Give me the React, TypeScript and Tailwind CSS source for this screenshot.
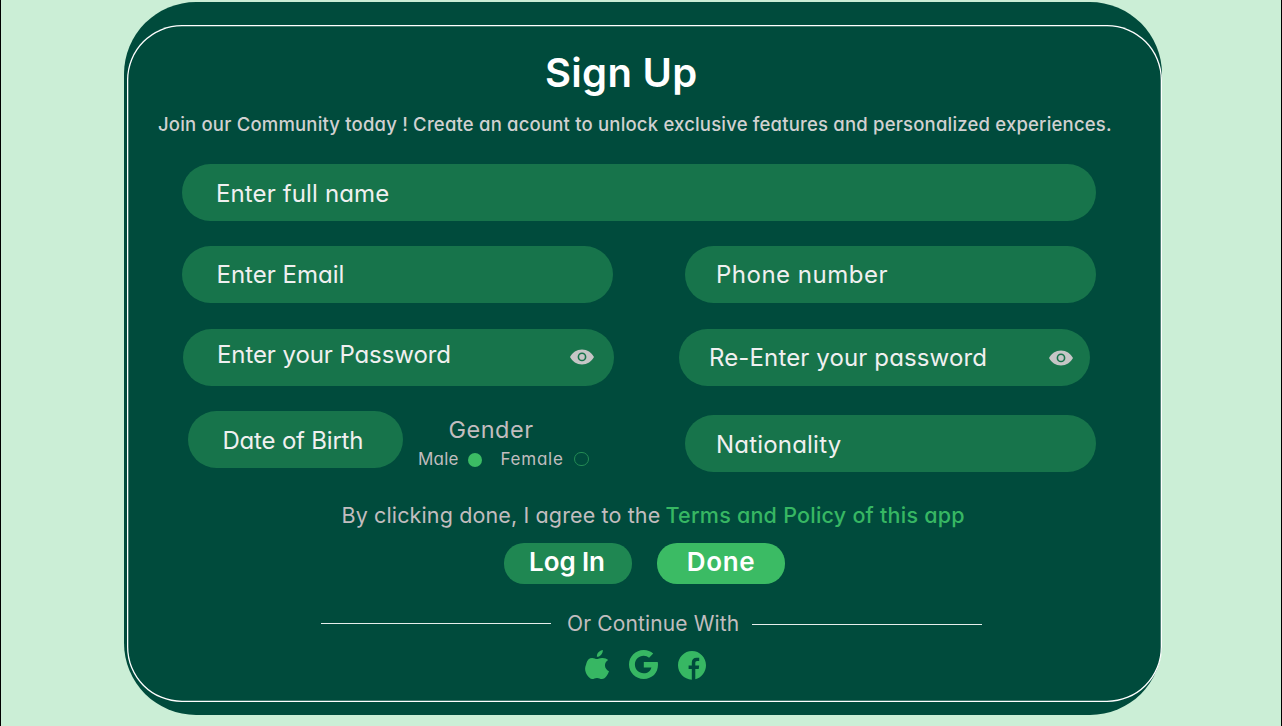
import type { ReactNode } from "react";

function EyeIcon() {
  return (
    <svg viewBox="0 0 24 16" className="h-4 w-6 shrink-0" aria-hidden="true">
      <path
        fill="#c6c6c6"
        fillRule="evenodd"
        d="M12 .4C6.8 .4 2.3 3.4 0 7.9c2.3 4.5 6.8 7.5 12 7.5s9.7-3 12-7.5C21.7 3.4 17.2 .4 12 .4Zm0 3.1a4.4 4.4 0 1 1 0 8.8 4.4 4.4 0 0 1 0-8.8Zm0 1.6a2.8 2.8 0 1 0 0 5.6 2.8 2.8 0 0 0 0-5.6Z"
      />
    </svg>
  );
}

function AppleIcon() {
  return (
    <svg viewBox="3.2 1 17.8 22" preserveAspectRatio="none" className="h-[29px] w-6" aria-hidden="true">
      <path
        fill="#37b763"
        d="M16.4 1c.1 1.3-.4 2.6-1.2 3.6-.8 1-2 1.700-3.200 1.600-.1-1.300.4-2.500 1.200-3.400C14 1.800 15.300 1.100 16.400 1ZM20.400 8.500c-1.500.9-2.400 2.300-2.400 4.100 0 2 1.200 3.800 3 4.500-.4 1.300-1 2.500-1.800 3.600-1 1.400-2 2.300-3.500 2.300-1.300 0-2-.8-3.600-.8s-2.300.8-3.500.8c-1.500 0-2.700-1.300-3.600-2.600-1.600-2.300-2.400-5.200-1-8.400.1-.4.200-.8.300-1.200C4.900 8.500 6.500 7 8.500 7c1.400 0 2.600.9 3.500.9S14.300 6.900 16.100 7c1.700 0 3.300.6 4.300 1.500Z"
      />
    </svg>
  );
}

function GoogleIcon() {
  return (
    <svg viewBox="0 0 29 29" className="h-[29px] w-[29px]" aria-hidden="true">
      <path
        fill="#37b763"
        d="M14.8 11.9h13.9c.2.9.3 1.8.3 2.7C29 23.2 23.2 29 14.7 29 6.6 29 0 22.5 0 14.5S6.6 0 14.7 0c3.7 0 7 1.3 9.5 3.6l-4.1 4.100c-1.500-1.300-3.300-2-5.400-2-4.900 0-8.800 3.900-8.800 8.800s3.900 8.800 8.800 8.800c4 0 6.900-2.200 7.700-5.900h-7.600Z"
      />
    </svg>
  );
}

function FacebookIcon() {
  return (
    <svg viewBox="0 0 28 29" className="h-[29px] w-7" aria-hidden="true">
      <path
        fill="#37b763"
        d="M14 0C6.3 0 0 6.3 0 14.2c0 7.7 6 14 13.8 14.5V18.1h-3.2v-3.500h3.200v-3.200c0-3.100 1.800-4.700 4.700-4.700h2.700v3.200h-2c-1.300 0-1.900.7-1.900 2v2.700h3.900l-.5 3.500h-3.400v10.100C23.300 26.800 28 21 28 14.200 28 6.300 21.700 0 14 0Z"
      />
    </svg>
  );
}

function Field({ className, label, text, children }: { className: string; label: string; text: string; children?: ReactNode }) {
  return (
    <div className={`flex h-[57px] items-center justify-between rounded-full bg-[#17744b] ${className}`}>
      <span className={`whitespace-nowrap text-[24px] leading-8 text-[#f0f0f0] ${text}`}>{label}</span>
      {children}
    </div>
  );
}

export default function App() {
  return (
    <div className="flex h-[726px] w-[1282px] items-start overflow-hidden border-x border-black bg-[#cbeed6] pt-[2px] pl-[123px] font-['Inter','Noto_Sans',sans-serif] [font-feature-settings:'cv11']">
      <main className="relative flex h-[713px] w-[1038px] shrink-0 flex-col rounded-[72px] bg-[#004b3c]">
        <div className="pointer-events-none absolute top-[23px] left-[3px] h-[677px] w-[1035px] rounded-[55px] shadow-[inset_0_0_0_1.3px_#fff]" />

        <h1 className="mt-[47px] ml-[421px] text-[40px] leading-[48px] font-semibold tracking-[0.3px] whitespace-nowrap text-white">
          Sign Up
        </h1>
        <p className="mt-[15px] ml-[34px] text-[18.5px] leading-6 font-medium tracking-[0.19px] whitespace-nowrap text-[#d1d1d1]">
          Join our Community today ! Create an acount to unlock exclusive features and personalized experiences.
        </p>

        <form className="flex flex-col" onSubmit={(e) => e.preventDefault()}>
          <Field className="mt-[28px] ml-[58px] w-[914px] pt-[3px] pl-[34px]" label="Enter full name" text="tracking-[0.13px]" />

          <div className="mt-[25px] ml-[58px] flex gap-[72px]">
            <Field className="w-[431px] pt-px pl-[34.5px]" label="Enter Email" text="tracking-[0px]" />
            <Field className="w-[411px] pl-[31px]" label="Phone number" text="tracking-[0.5px]" />
          </div>

          <div className="mt-[26px] ml-[59px] flex gap-[65px]">
            <Field className="w-[431px] pr-[20px] pb-px pl-[34px]" label="Enter your Password" text="pb-[4px] tracking-[-0.09px]">
              <EyeIcon />
            </Field>
            <Field className="w-[411px] pt-px pr-[17px] pl-[30px]" label="Re-Enter your password" text="tracking-[0.13px]">
              <EyeIcon />
            </Field>
          </div>

          <div className="mt-[25px] ml-[64px] flex h-[61px] items-start">
            <Field className="w-[215px] pt-[2px] pl-[34.5px]" label="Date of Birth" text="tracking-[-0.2px]" />
            <fieldset className="ml-[15px] w-[267px] text-[#c2bdbf]">
              <div className="mt-[5px] ml-[30.5px] text-[23.5px] leading-7 tracking-[0.5px]">Gender</div>
              <div className="mt-[4px] flex h-5 items-center text-[17px] leading-5">
                <span className="w-[50px] pt-px tracking-[0.2px]">Male</span>
                <span className="mt-[3px] h-3.5 w-3.5 rounded-full bg-[#3bbb64]" />
                <span className="ml-[18.5px] w-[73.5px] pt-px tracking-[0.75px]">Female</span>
                <span className="mt-[2px] h-[14.5px] w-[14.5px] rounded-full border border-[#248b54]" />
              </div>
            </fieldset>
            <Field className="mt-1 w-[411px] pt-[3px] pl-[31px]" label="Nationality" text="tracking-[0.2px]" />
          </div>

          <p className="mt-[29px] ml-[217.5px] text-[21.5px] leading-7 whitespace-nowrap text-[#c2bdbf]">
            <span className="inline-block w-[324px] tracking-[0.13px]">By clicking done, I agree to the</span>
            <a className="font-medium tracking-[0.24px] text-[#37b763]">Terms and Policy of this app</a>
          </p>

          <div className="mt-[14px] ml-[380px] flex gap-[25px] text-[26px] leading-9 font-semibold text-white">
            <button className="h-[41px] w-[128px] rounded-[20px] bg-[#1f8752] pr-[2px] pb-[4px] tracking-[-0.1px]">Log In</button>
            <button className="h-[41px] w-[128px] rounded-[20px] bg-[#3bbb64] pb-[4px] tracking-[0.6px]">Done</button>
          </div>
        </form>

        <div className="mt-[26px] ml-[197px] flex h-7 items-start">
          <span className="mt-[13px] h-px w-[230px] bg-[#e6eeec]" />
          <span className="ml-[16px] w-[185px] text-[21px] leading-7 tracking-[0.13px] whitespace-nowrap text-[#c2bdbf]">
            Or Continue With
          </span>
          <span className="mt-[14px] h-px w-[230px] bg-[#e6eeec]" />
        </div>

        <div className="mt-[12px] ml-[461px] flex">
          <AppleIcon />
          <span className="ml-5"><GoogleIcon /></span>
          <span className="mt-px ml-5"><FacebookIcon /></span>
        </div>
      </main>
    </div>
  );
}
